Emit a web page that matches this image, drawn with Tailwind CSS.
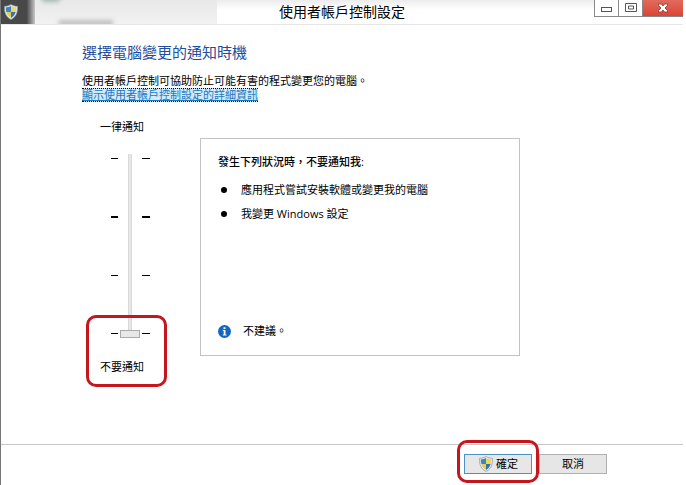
<!DOCTYPE html>
<html lang="zh-Hant">
<head>
    <meta charset="UTF-8">
    <meta name="viewport" content="width=device-width, initial-scale=1.0">
    <title>使用者帳戶控制設定</title>
    <script src="https://cdn.jsdelivr.net/npm/@tailwindcss/browser@4"></script>
</head>
<body class="bg-white pr-[3px] font-['Open_Sans','Noto_Sans_CJK_TC',sans-serif] text-[11px] leading-4 text-black">
    <!-- Shield shared by the title bar and the OK button -->
    <svg class="hidden">
        <symbol id="shield" viewBox="0 0 16 16">
            <path d="M8 .5C6 1.7 4 2.2 1.5 2.3c-.3 6 1.300 10.600 6.500 13.200 5.200-2.600 6.800-7.200 6.500-13.200C12 2.200 10 1.700 8 .5z" fill="#e4e8ec" stroke="#8d99a5" stroke-width=".7"/>
            <path d="M8 2C6.300 3 4.700 3.400 2.800 3.500c0 1.700.1 3.200.6 4.500H8z" fill="#3c86bd"/>
            <path d="M8 2c1.700 1 3.300 1.400 5.200 1.500 0 1.700-.1 3.200-.6 4.500H8z" fill="#f0d75a"/>
            <path d="M3.400 8c.7 2.600 2.200 4.600 4.600 6V8z" fill="#eccd45"/>
            <path d="M12.600 8c-.7 2.600-2.200 4.600-4.600 6V8z" fill="#2f74b5"/>
        </symbol>
    </svg>

    <div class="flex min-h-screen flex-col border-l border-[#777]">
        <header class="relative flex h-[25px] items-start justify-between overflow-hidden border-b border-[#e6e6e6] bg-white">
            <!-- Content behind the glass -->
            <div class="absolute inset-0 flex">
                <div class="w-[34px] bg-linear-to-r from-[#484848] from-75% to-[#c8c8c8]"></div>
                <div class="w-[182px] bg-linear-to-b from-[#e8e8e8] to-[#f2f2f2]"></div>
                <div class="flex-1 bg-linear-to-b from-[#ececec] to-white to-40%"></div>
            </div>
            <div class="absolute -top-2 left-10 h-2.5 w-5 rounded-full bg-[#a5b8b0] blur-[2px]"></div>
            <div class="absolute top-5 left-[58px] h-1.5 w-[54px] bg-[#c0c0c0] blur-[2px]"></div>
            <svg class="relative mt-1 ml-[2px] size-4"><use href="#shield"/></svg>
            <h1 class="absolute inset-x-0 top-0 text-center text-[14px] leading-6">使用者帳戶控制設定</h1>
            <div class="relative flex h-[17px] border-b border-l border-[#888]">
                <button type="button" aria-label="最小化" class="flex w-6 items-center justify-center border-r border-[#888] bg-white">
                    <svg class="h-2.5 w-3" viewBox="0 0 12 10"><rect x=".5" y="4.500" width="10" height="4" fill="#fff" stroke="#555"/></svg>
                </button>
                <button type="button" aria-label="最大化" class="flex w-6 items-center justify-center border-r border-[#888] bg-white">
                    <svg class="h-2.5 w-3" viewBox="0 0 12 10"><path d="M.5.5h11v8H.5zM3.500 3v3h5V3z" fill="#fff" stroke="#555"/></svg>
                </button>
                <button type="button" aria-label="關閉" class="flex w-10 items-center justify-center bg-linear-to-b from-[#e26a5c] to-[#d94436]">
                    <svg class="h-2.5 w-3" viewBox="0 0 12 10"><path d="M1.500 1h3L6 3l1.500-2h3v1.500L8 5l2.500 2.500V9h-3L6 7 4.500 9h-3V7.500L4 5 1.500 2.500z" fill="#fff" stroke="#7d3932" stroke-width=".8"/></svg>
                </button>
            </div>
        </header>

        <main class="flex flex-1 flex-col items-start pt-[15px] pl-[81px]">
            <h2 class="text-[15px] leading-6 text-[#1f4e9c]">選擇電腦變更的通知時機</h2>
            <p class="mt-[9px]">使用者帳戶控制可協助防止可能有害的程式變更您的電腦。</p>
            <a href="#" class="-mt-px border-y border-dotted border-black bg-[#d3eafa] leading-3 text-[#1979c0] underline">顯示使用者帳戶控制設定的詳細資訊</a>

            <div class="mt-4 flex items-start">
                <div class="flex w-[94px] flex-col items-start pt-px pl-[18px]">
                    <label for="level">一律通知</label>
                    <div class="mt-[19px] ml-[11px] flex gap-0.5">
                        <div class="flex flex-col justify-between py-1">
                            <span class="h-px w-[7px] bg-black"></span>
                            <span class="h-0.5 w-[7px] bg-black"></span>
                            <span class="h-px w-[7px] bg-black"></span>
                            <span class="h-px w-[7px] bg-black"></span>
                        </div>
                        <input id="level" type="range" min="0" max="3" value="0" class="h-[184px] w-5 appearance-none bg-[linear-gradient(to_right,transparent_8px,#c9c9c9_8px,#e8e8e8_9px,#e8e8e8_11px,#c9c9c9_12px,transparent_12px)] [direction:rtl] [writing-mode:vertical-lr] [&::-webkit-slider-thumb]:h-2 [&::-webkit-slider-thumb]:w-5 [&::-webkit-slider-thumb]:appearance-none [&::-webkit-slider-thumb]:border [&::-webkit-slider-thumb]:border-[#aaa] [&::-webkit-slider-thumb]:bg-[#e8e8e8]">
                        <div class="flex flex-col justify-between py-1">
                            <span class="h-px w-2 bg-black"></span>
                            <span class="h-0.5 w-2 bg-black"></span>
                            <span class="h-px w-2 bg-black"></span>
                            <span class="h-px w-2 bg-black"></span>
                        </div>
                    </div>
                    <div class="relative mt-[21px]">
                        <span>不要通知</span>
                        <div class="pointer-events-none absolute -top-11 -right-[23px] -bottom-3 -left-[14px] rounded-[10px] border-[3px] border-[#c5161d]"></div>
                    </div>
                </div>

                <section class="mt-5 ml-6 flex h-[218px] w-80 flex-col border border-[#c3c3c3] px-[17px] pt-[15px] pb-4">
                    <h3 class="font-medium">發生下列狀況時，不要通知我:</h3>
                    <ul class="mt-3 flex flex-col gap-2">
                        <li class="flex items-center gap-3.5 pl-[3px]"><span class="size-1.5 rounded-full bg-black"></span>應用程式嘗試安裝軟體或變更我的電腦</li>
                        <li class="flex items-center gap-3.5 pl-[3px]"><span class="size-1.5 rounded-full bg-black"></span>我變更 Windows 設定</li>
                    </ul>
                    <div class="mt-auto flex items-center gap-3">
                        <svg class="size-[13px]" viewBox="0 0 13 13"><circle cx="6.500" cy="6.500" r="6.500" fill="#1167c0"/><path d="M5.500 2.200h2v1.800h-2zM4.800 5h2.700v4.500h1v1h-3.700v-1h.9V6h-.9z" fill="#fff"/></svg>
                        <p>不建議。</p>
                    </div>
                </section>
            </div>
        </main>

        <footer class="flex h-[41px] items-start justify-end gap-[7px] border-t border-[#c6c6c6] pt-[9px] pr-[76px]">
            <div class="relative">
                <button type="button" class="flex h-5 w-[68px] items-center justify-center gap-0.5 border border-[#4b93c0] bg-[#e7e7e7]"><svg class="size-4"><use href="#shield"/></svg>確定</button>
                <div class="pointer-events-none absolute -inset-x-[7px] -top-[14px] -bottom-[9px] rounded-[10px] border-[3px] border-[#c5161d]"></div>
            </div>
            <button type="button" class="h-5 w-[68px] border border-[#b0b0b0] bg-[#e6e6e6]">取消</button>
        </footer>
    </div>
</body>
</html>
